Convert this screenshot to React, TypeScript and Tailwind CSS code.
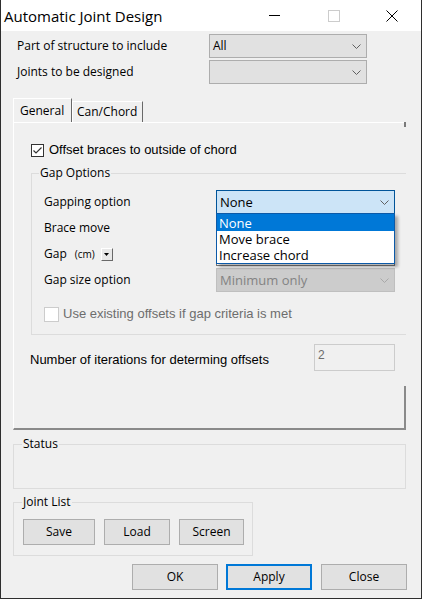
import type { ReactNode } from "react";

const ui = "font-['Open_Sans',sans-serif] text-[12px] text-black";
const msFont = "font-['Liberation_Sans',Arial,sans-serif] text-[13px]";

function Chevron({ color = "#606060" }: { color?: string }) {
  return (
    <svg width="9" height="5" viewBox="0 0 9 5" className="shrink-0">
      <polyline points="0.5,0.5 4.5,4.5 8.5,0.5" fill="none" stroke={color} strokeWidth="1" />
    </svg>
  );
}

function Select({
  value,
  className,
  tone = "normal",
}: {
  value: string;
  className: string;
  tone?: "normal" | "focus" | "disabled";
}) {
  const look =
    tone === "focus"
      ? "bg-[#cce4f7] border-[#005499] text-black text-[13px]"
      : tone === "disabled"
      ? "bg-[#cccccc] border-[#bfbfbf] text-[#838383] text-[13px]"
      : "bg-[#e1e1e1] border-[#adadad] text-black text-[12px]";
  return (
    <div
      className={[
        "flex items-center justify-between border pl-[3px] pr-[5px] font-['Open_Sans',sans-serif] leading-[18px]",
        look,
        className,
      ].join(" ")}
    >
      <span>{value}</span>
      <Chevron color={tone === "disabled" ? "#a8a8a8" : "#606060"} />
    </div>
  );
}

function Group({
  label,
  className,
  labelLeft,
  children,
}: {
  label: string;
  className: string;
  labelLeft: string;
  children?: ReactNode;
}) {
  return (
    <div className={["relative border-[#dcdcdc]", className].join(" ")}>
      <span
        className={[
          "absolute top-[-10px] px-[1px] bg-[#f0f0f0] leading-[18px]",
          ui,
          labelLeft,
        ].join(" ")}
      >
        {label}
      </span>
      {children}
    </div>
  );
}

function Button({ label, className }: { label: string; className: string }) {
  return (
    <div
      className={[
        "flex items-center justify-center bg-[#e1e1e1] h-[26px]",
        ui,
        className,
      ].join(" ")}
    >
      {label}
    </div>
  );
}

function TitleBar() {
  return (
    <div className="h-[31px] bg-white flex items-center shrink-0">
      <span className="pl-[3px] pt-[1px] font-['Open_Sans',sans-serif] text-[15px] text-black">
        Automatic Joint Design
      </span>
      <div className="ml-auto flex items-center h-full">
        <div className="w-[59px] h-full flex items-center justify-center">
          <div className="w-[11px] h-px bg-black" />
        </div>
        <div className="w-[59px] h-full flex items-center justify-center">
          <div className="w-[12px] h-[12px] border border-[#cccccc]" />
        </div>
        <div className="w-[58px] h-full flex items-center justify-center">
          <svg width="12" height="12" viewBox="0 0 12 12">
            <line x1="0.5" y1="0.5" x2="11.5" y2="11.5" stroke="#000" strokeWidth="1" />
            <line x1="11.5" y1="0.5" x2="0.5" y2="11.5" stroke="#000" strokeWidth="1" />
          </svg>
        </div>
      </div>
    </div>
  );
}

function FormRow({ label, children }: { label: ReactNode; children: ReactNode }) {
  return (
    <div className="flex items-center h-[24px]">
      <div className={["w-[172px] flex items-center", ui].join(" ")}>{label}</div>
      {children}
    </div>
  );
}

export default function App() {
  return (
    <div className="w-[422px] h-[599px] border-x border-b border-[#2e2e2e] flex flex-col bg-[#f0f0f0] overflow-hidden">
      <TitleBar />

      <div className="flex-1 flex flex-col pl-[12px] pt-[3px]">
        <div className="flex items-center h-[24px]">
          <div className={["w-[196px] pl-[4px]", ui].join(" ")}>Part of structure to include</div>
          <Select value="All" className="w-[158px] h-[24px]" />
        </div>
        <div className="flex items-center h-[24px] mt-[2px]">
          <div className={["w-[196px] pl-[4px]", ui].join(" ")}>Joints to be designed</div>
          <Select value="" className="w-[158px] h-[24px]" />
        </div>

        <div className="mt-[14px] flex items-end h-[24px]">
          <div
            className={[
              "w-[59px] h-[24px] border-l border-t border-white border-r border-r-[#696969] pl-[6px] flex items-center",
              ui,
            ].join(" ")}
          >
            General
          </div>
          <div
            className={[
              "w-[71px] h-[21px] border-l border-t border-white border-r border-r-[#696969] pl-[4px] flex items-center",
              ui,
            ].join(" ")}
          >
            Can/Chord
          </div>
        </div>

        <div className="relative w-[393px] h-[308px] border-l border-t border-white border-b-2 border-b-[#8a8a8a] flex flex-col">
          <div className="absolute right-0 top-[-1px] w-[2px] h-[5px] bg-[#7a7a7a]" />

          <div className="mt-[19px] ml-[17px] flex items-center h-[16px]">
            <div className="w-[13px] h-[13px] border border-[#333333] bg-white flex items-center justify-center">
              <svg width="11" height="11" viewBox="0 0 11 11">
                <polyline points="1.5,5.5 4,8 9.5,2.5" fill="none" stroke="#333" strokeWidth="1.2" />
              </svg>
            </div>
            <span className={["ml-[5px] text-black", msFont].join(" ")}>Offset braces to outside of chord</span>
          </div>

          <Group
            label="Gap Options"
            labelLeft="left-[7px]"
            className="mt-[15px] ml-[17px] border-l border-t border-b pl-[12px] pt-[16px] pb-[12px]"
          >
            <div className="flex flex-col gap-[2px]">
              <FormRow label="Gapping option">
                <div className="relative">
                  <Select value="None" tone="focus" className="w-[179px] h-[24px]" />
                  <div className="absolute left-0 top-[23px] w-[179px] z-10 bg-white border border-[#0c5aa8] shadow-[3px_3px_3px_rgba(0,0,0,0.3)] font-['Open_Sans',sans-serif] text-[13px] leading-[16px]">
                    <div className="h-[17px] pl-[2px] flex items-center bg-[#0078d7] text-white">None</div>
                    <div className="h-[16px] pl-[2px] flex items-center text-black">Move brace</div>
                    <div className="h-[16px] pl-[2px] flex items-center text-black">Increase chord</div>
                  </div>
                </div>
              </FormRow>
              <FormRow label="Brace move">
                <div className="w-[179px] h-[24px] bg-[#e1e1e1] border border-[#adadad]" />
              </FormRow>
              <FormRow
                label={
                  <>
                    <span>Gap</span>
                    <span className="ml-[8px] font-['Open_Sans',sans-serif] text-[10px]">(cm)</span>
                    <div className="ml-[6px] w-[12px] h-[13px] bg-[#e8e8e8] border-t border-l border-white border-r border-b border-r-[#696969] border-b-[#696969] flex items-center justify-center">
                      <svg width="5" height="3" viewBox="0 0 5 3">
                        <polygon points="0,0 5,0 2.5,3" fill="#000" />
                      </svg>
                    </div>
                  </>
                }
              >
                <div className="w-[179px] h-[24px] bg-white border border-[#7a7a7a]" />
              </FormRow>
              <FormRow label="Gap size option">
                <Select value="Minimum only" tone="disabled" className="w-[179px] h-[24px]" />
              </FormRow>
            </div>

            <div className="mt-[14px] flex items-center h-[16px]">
              <div className="w-[15px] h-[15px] border border-[#cccccc] bg-white" />
              <span className={["ml-[4px] text-[#6d6d6d]", msFont].join(" ")}>
                Use existing offsets if gap criteria is met
              </span>
            </div>
          </Group>

          <div className="mt-[9px] flex items-center h-[27px]">
            <div className={["w-[300px] pl-[16px] pt-[4px] text-black", msFont].join(" ")}>
              Number of iterations for determing offsets
            </div>
            <div className="w-[81px] h-[27px] border border-[#cccccc] pl-[3px] pt-[2px] font-['Liberation_Sans',Arial,sans-serif] text-[12px] text-[#6d6d6d] leading-[16px]">
              2
            </div>
          </div>

          <div className="h-[15px]" />
          <div className="flex-1 border-r-2 border-r-[#8a8a8a]" />
        </div>

        <Group
          label="Status"
          labelLeft="left-[8px]"
          className="mt-[14px] w-[393px] h-[45px] border"
        />

        <Group
          label="Joint List"
          labelLeft="left-[8px]"
          className="mt-[13px] w-[240px] h-[54px] border pl-[9px] pt-[16px]"
        >
          <div className="flex gap-[9px]">
            <Button label="Save" className="w-[72px] border border-[#adadad]" />
            <Button label="Load" className="w-[66px] border border-[#adadad]" />
            <Button label="Screen" className="w-[65px] border border-[#adadad]" />
          </div>
        </Group>

        <div className="mt-[8px] flex justify-end pr-[14px]">
          <Button label="OK" className="w-[86px] border border-[#adadad] mr-[8px]" />
          <Button label="Apply" className="w-[86px] border-2 border-[#0078d7] mr-[9px]" />
          <Button label="Close" className="w-[86px] border border-[#adadad]" />
        </div>
      </div>
    </div>
  );
}
